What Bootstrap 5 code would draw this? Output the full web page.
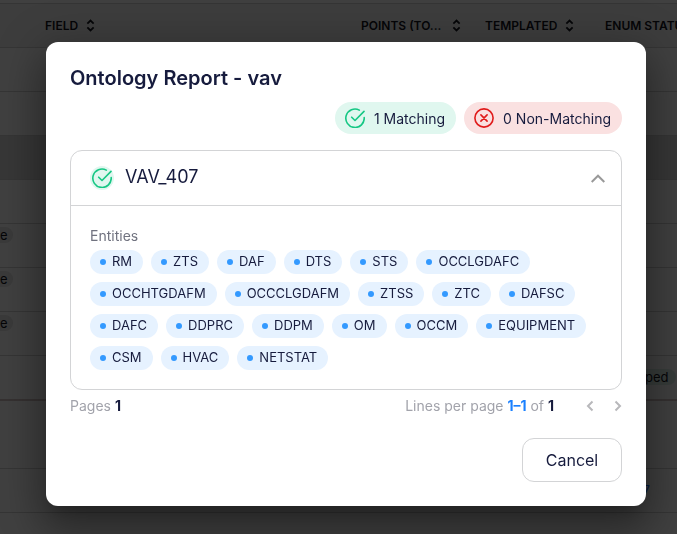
<!DOCTYPE html>
<html lang="en">
<head>
<meta charset="utf-8">
<meta name="viewport" content="width=device-width, initial-scale=1">
<title>Ontology Report</title>
<link rel="stylesheet" href="https://cdn.jsdelivr.net/npm/bootstrap@5.3.0/dist/css/bootstrap.min.css">
<style>
  body { font-family: Inter, "Liberation Sans", sans-serif; font-size: 14px; color: #161b3d; background: #fff; overflow: hidden; }
  svg { fill: none; stroke: currentColor; flex: none; display: block; }

  /* Data grid behind the dialog */
  .grid-table { table-layout: fixed; margin-top: 3px; font-size: 13px; border-collapse: separate; border-spacing: 0; }
  .grid-table th, .grid-table td { height: 44px; padding: 0; border-top: 1px solid #d2d2d2; white-space: nowrap; overflow: hidden; color: #14161f; vertical-align: middle; }
  .grid-table th { font-size: 12px; font-weight: 600; background: #f4f4f4; }
  .grid-table .row-hover td { background: #dcdcdc; }
  .grid-table .row-tall td { height: 69px; border-top: 2px solid #d2c4c4; }
  .grid-table .cell-tag { vertical-align: top; padding-top: 2px; }
  .col-tag { width: 45px; }
  .col-field { width: 316px; }
  .col-points { width: 124px; }
  .col-templated { width: 120px; }
  .tag-end { display: inline-block; background: #e6e6e6; border-radius: 0 8px 8px 0; padding: 0 5px 0 0; line-height: 16px; }
  .tag-mapped { display: inline-block; background: #dcefe8; border-radius: 8px; padding: 0 7px 0 13px; line-height: 16px; }
  .modal-backdrop { --bs-backdrop-opacity: .75; }

  /* Dialog */
  .report-dialog { max-width: 600px; margin: 42px 31px 28px 46px; }
  .report-dialog .modal-content { color: #161b3d; border-radius: 12px; padding: 24px; border: 0;
    box-shadow: 0 11px 15px -7px rgba(0,0,0,.2), 0 24px 38px 3px rgba(0,0,0,.24), 0 9px 46px 8px rgba(0,0,0,.22); }
  .report-title { font-size: 20px; line-height: 24px; font-weight: 600; margin-bottom: 12px; }
  .status-pill { height: 32px; padding: 0 11px 0 10px; gap: 9px; }
  .status-ok { background: #e0f7ef; }
  .status-bad { background: #fae1e1; }
  .icon-ok { color: #16c784; }
  .icon-bad { color: #e01b1b; }
  .icon-toggle { color: #999; }
  .report-card { border: 1px solid #d3d4d6; border-radius: 12px; }
  .report-card-head { height: 55px; padding: 0 16px 0 19px; border: 0; border-bottom: 1px solid #d3d4d6; background: none; color: inherit; }
  .report-name { font-size: 18px; line-height: 24px; padding: 0 0 2px 3px; }
  .icon-halo { width: 24px; height: 24px; background: #e0f7ef; }
  .report-card-body { padding: 19px; }
  .entities-label { font-size: 14px; line-height: 22px; color: #70727f; margin: 0 0 3px; }
  .chip { height: 24px; padding: 0 11px 0 10px; gap: 6px; font-size: 13px; background: #e6f2ff; }
  .chip::before { content: ""; width: 6px; height: 6px; border-radius: 50%; background: #3399ff; }
  .pager { line-height: 32px; color: #a2a3ab; }
  .pager b { color: #161b3d; }
  .pager .range { color: #1a80ff; }
  .pager button { color: #b8b8bb; line-height: 0; }
  .btn-cancel { width: 100px; height: 44px; border: 1px solid #d3d4d6; border-radius: 12px; font-size: 16px; color: #161b3d; padding: 0; }
</style>
</head>
<body>
<svg class="d-none" aria-hidden="true">
  <symbol id="i-sort" viewBox="0 0 10 14"><path d="M1.500 5 5 1.500 8.500 5M1.500 9 5 12.500 8.500 9" stroke-width="2"/></symbol>
  <symbol id="i-check" viewBox="0 0 20 20"><path d="M14.300 2.100A9.200 9.200 0 1 0 19.200 9.500M6.700 9.200 10 12.500 19 3.400" stroke-width="1.600" stroke-linecap="round" stroke-linejoin="round"/></symbol>
</svg>

<table class="grid-table w-100">
  <colgroup><col class="col-tag"><col class="col-field"><col class="col-points"><col class="col-templated"><col></colgroup>
  <thead>
    <tr>
      <th></th>
      <th><span class="d-flex align-items-center gap-2">FIELD <svg width="9" height="13"><use href="#i-sort"/></svg></span></th>
      <th><span class="d-flex align-items-center justify-content-between pe-4">POINTS (TO... <svg width="9" height="13"><use href="#i-sort"/></svg></span></th>
      <th><span class="d-flex align-items-center gap-2">TEMPLATED <svg width="9" height="13"><use href="#i-sort"/></svg></span></th>
      <th>ENUM STATUS</th>
    </tr>
  </thead>
  <tbody>
    <tr><td colspan="5"></td></tr>
    <tr><td colspan="5"></td></tr>
    <tr class="row-hover"><td colspan="5"></td></tr>
    <tr><td colspan="5"></td></tr>
    <tr><td class="cell-tag"><span class="tag-end">e</span></td><td colspan="4"></td></tr>
    <tr><td class="cell-tag"><span class="tag-end">e</span></td><td colspan="4"></td></tr>
    <tr><td class="cell-tag"><span class="tag-end">e</span></td><td colspan="4"></td></tr>
    <tr><td colspan="4"></td><td><span class="tag-mapped">Mapped</span></td></tr>
    <tr class="row-tall"><td colspan="5"></td></tr>
    <tr><td colspan="4"></td><td><a href="#" class="text-primary text-decoration-none">AV_407</a></td></tr>
    <tr><td colspan="5"></td></tr>
  </tbody>
</table>

<div class="modal-backdrop show"></div>
<div class="modal d-block" role="dialog" aria-modal="true" aria-labelledby="report-title">
  <div class="modal-dialog report-dialog">
    <div class="modal-content">
      <h1 class="report-title" id="report-title">Ontology Report - vav</h1>

      <div class="d-flex justify-content-end gap-2 mb-3">
        <span class="status-pill status-ok rounded-pill d-flex align-items-center"><svg class="icon-ok" width="20" height="20"><use href="#i-check"/></svg>1 Matching</span>
        <span class="status-pill status-bad rounded-pill d-flex align-items-center"><svg class="icon-bad" width="20" height="20" viewBox="0 0 20 20" stroke-width="1.600" stroke-linecap="round"><circle cx="10" cy="10" r="9.100"/><path d="m6.900 6.900 6.200 6.200m0-6.200-6.200 6.200"/></svg>0 Non-Matching</span>
      </div>

      <section class="report-card">
        <button type="button" class="report-card-head w-100 d-flex align-items-center text-start" aria-expanded="true" aria-controls="report-body">
          <span class="icon-halo rounded-circle d-flex align-items-center justify-content-center me-2"><svg class="icon-ok" width="20" height="20"><use href="#i-check"/></svg></span>
          <span class="report-name flex-grow-1">VAV_407</span>
          <svg class="icon-toggle" width="14" height="9" viewBox="0 0 14 9" stroke-width="2"><path d="M.700 8 7 1.700 13.300 8"/></svg>
        </button>
        <div class="report-card-body" id="report-body">
          <p class="entities-label">Entities</p>
          <div class="d-flex flex-wrap gap-2">
            <span class="chip rounded-pill d-flex align-items-center">RM</span>
            <span class="chip rounded-pill d-flex align-items-center">ZTS</span>
            <span class="chip rounded-pill d-flex align-items-center">DAF</span>
            <span class="chip rounded-pill d-flex align-items-center">DTS</span>
            <span class="chip rounded-pill d-flex align-items-center">STS</span>
            <span class="chip rounded-pill d-flex align-items-center">OCCLGDAFC</span>
            <span class="chip rounded-pill d-flex align-items-center">OCCHTGDAFM</span>
            <span class="chip rounded-pill d-flex align-items-center">OCCCLGDAFM</span>
            <span class="chip rounded-pill d-flex align-items-center">ZTSS</span>
            <span class="chip rounded-pill d-flex align-items-center">ZTC</span>
            <span class="chip rounded-pill d-flex align-items-center">DAFSC</span>
            <span class="chip rounded-pill d-flex align-items-center">DAFC</span>
            <span class="chip rounded-pill d-flex align-items-center">DDPRC</span>
            <span class="chip rounded-pill d-flex align-items-center">DDPM</span>
            <span class="chip rounded-pill d-flex align-items-center">OM</span>
            <span class="chip rounded-pill d-flex align-items-center">OCCM</span>
            <span class="chip rounded-pill d-flex align-items-center">EQUIPMENT</span>
            <span class="chip rounded-pill d-flex align-items-center">CSM</span>
            <span class="chip rounded-pill d-flex align-items-center">HVAC</span>
            <span class="chip rounded-pill d-flex align-items-center">NETSTAT</span>
          </div>
        </div>
      </section>

      <div class="pager d-flex justify-content-between mb-3">
        <span>Pages <b>1</b></span>
        <nav class="d-flex align-items-center" aria-label="Pagination">
          <span class="me-4 pe-2">Lines per page <b class="range">1–1</b> of <b>1</b></span>
          <button type="button" class="border-0 bg-transparent p-0 me-3 pe-1" aria-label="Previous page"><svg width="8" height="12" viewBox="0 0 8 12" stroke-width="2"><path d="M6.500 1.500 2 6l4.500 4.500"/></svg></button>
          <button type="button" class="border-0 bg-transparent p-0" aria-label="Next page"><svg width="8" height="12" viewBox="0 0 8 12" stroke-width="2"><path d="M1.500 1.500 6 6l-4.500 4.500"/></svg></button>
        </nav>
      </div>

      <button type="button" class="btn btn-cancel align-self-end">Cancel</button>
    </div>
  </div>
</div>
<script src="https://cdn.jsdelivr.net/npm/bootstrap@5.3.0/dist/js/bootstrap.bundle.min.js"></script>
</body>
</html>
